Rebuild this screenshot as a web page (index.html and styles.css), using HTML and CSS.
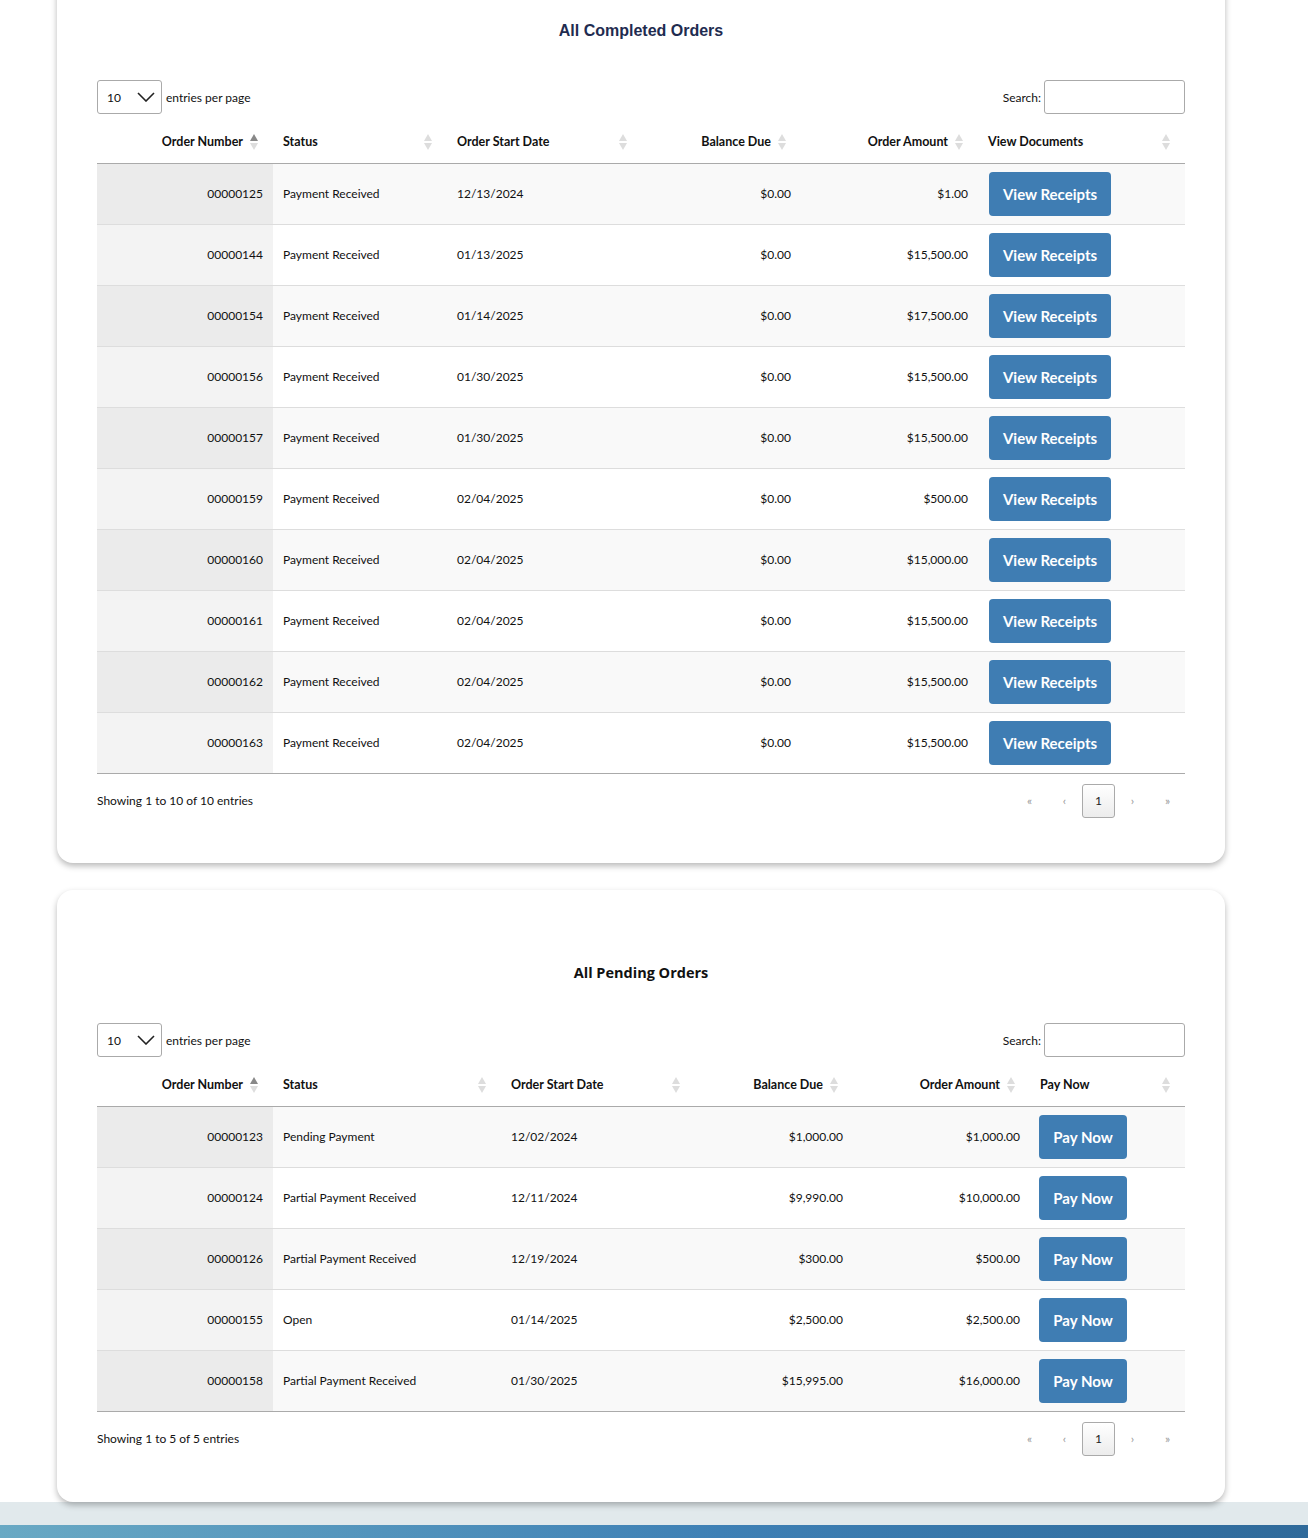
FILE: index.html
```html
<!DOCTYPE html>
<html>
<head>
<meta charset="utf-8">
<link rel="stylesheet" href="styles.css">
</head>
<body>
<div class="page">
  <section class="card card-first">
    <h2 class="title title-completed">All Completed Orders</h2>
    <div class="controls">
      <div class="length">
        <div class="select"><span>10</span><svg class="chev" width="18" height="10" viewBox="0 0 18 10"><path d="M1 1 L9 9 L17 1" fill="none" stroke="#222" stroke-width="1.6"/></svg></div>
        <span class="label">entries per page</span>
      </div>
      <div class="search"><span class="label">Search:</span><div class="input"></div></div>
    </div>
    <table class="dt dt-completed">
      <colgroup><col class="c1"><col class="c2"><col class="c3"><col class="c4"><col class="c5"><col class="c6"></colgroup>
      <thead>
        <tr>
          <th class="num sorted">Order Number<span class="sort"><i class="up"></i><i class="down"></i></span></th>
          <th>Status<span class="sort"><i class="up"></i><i class="down"></i></span></th>
          <th>Order Start Date<span class="sort"><i class="up"></i><i class="down"></i></span></th>
          <th class="num">Balance Due<span class="sort"><i class="up"></i><i class="down"></i></span></th>
          <th class="num">Order Amount<span class="sort"><i class="up"></i><i class="down"></i></span></th>
          <th>View Documents<span class="sort"><i class="up"></i><i class="down"></i></span></th>
        </tr>
      </thead>
      <tbody>
        <tr><td class="num key">00000125</td><td>Payment Received</td><td>12/13/2024</td><td class="num">$0.00</td><td class="num">$1.00</td><td><span class="btn btn-receipts">View Receipts</span></td></tr>
        <tr><td class="num key">00000144</td><td>Payment Received</td><td>01/13/2025</td><td class="num">$0.00</td><td class="num">$15,500.00</td><td><span class="btn btn-receipts">View Receipts</span></td></tr>
        <tr><td class="num key">00000154</td><td>Payment Received</td><td>01/14/2025</td><td class="num">$0.00</td><td class="num">$17,500.00</td><td><span class="btn btn-receipts">View Receipts</span></td></tr>
        <tr><td class="num key">00000156</td><td>Payment Received</td><td>01/30/2025</td><td class="num">$0.00</td><td class="num">$15,500.00</td><td><span class="btn btn-receipts">View Receipts</span></td></tr>
        <tr><td class="num key">00000157</td><td>Payment Received</td><td>01/30/2025</td><td class="num">$0.00</td><td class="num">$15,500.00</td><td><span class="btn btn-receipts">View Receipts</span></td></tr>
        <tr><td class="num key">00000159</td><td>Payment Received</td><td>02/04/2025</td><td class="num">$0.00</td><td class="num">$500.00</td><td><span class="btn btn-receipts">View Receipts</span></td></tr>
        <tr><td class="num key">00000160</td><td>Payment Received</td><td>02/04/2025</td><td class="num">$0.00</td><td class="num">$15,000.00</td><td><span class="btn btn-receipts">View Receipts</span></td></tr>
        <tr><td class="num key">00000161</td><td>Payment Received</td><td>02/04/2025</td><td class="num">$0.00</td><td class="num">$15,500.00</td><td><span class="btn btn-receipts">View Receipts</span></td></tr>
        <tr><td class="num key">00000162</td><td>Payment Received</td><td>02/04/2025</td><td class="num">$0.00</td><td class="num">$15,500.00</td><td><span class="btn btn-receipts">View Receipts</span></td></tr>
        <tr><td class="num key">00000163</td><td>Payment Received</td><td>02/04/2025</td><td class="num">$0.00</td><td class="num">$15,500.00</td><td><span class="btn btn-receipts">View Receipts</span></td></tr>
      </tbody>
    </table>
    <div class="footer">
      <div class="info">Showing 1 to 10 of 10 entries</div>
      <div class="paging">
        <span class="pg">«</span><span class="pg">‹</span><span class="pg current">1</span><span class="pg">›</span><span class="pg">»</span>
      </div>
    </div>
  </section>

  <section class="card card-second">
    <h2 class="title title-pending">All Pending Orders</h2>
    <div class="controls">
      <div class="length">
        <div class="select"><span>10</span><svg class="chev" width="18" height="10" viewBox="0 0 18 10"><path d="M1 1 L9 9 L17 1" fill="none" stroke="#222" stroke-width="1.6"/></svg></div>
        <span class="label">entries per page</span>
      </div>
      <div class="search"><span class="label">Search:</span><div class="input"></div></div>
    </div>
    <table class="dt dt-pending">
      <colgroup><col class="p1"><col class="p2"><col class="p3"><col class="p4"><col class="p5"><col class="p6"></colgroup>
      <thead>
        <tr>
          <th class="num sorted">Order Number<span class="sort"><i class="up"></i><i class="down"></i></span></th>
          <th>Status<span class="sort"><i class="up"></i><i class="down"></i></span></th>
          <th>Order Start Date<span class="sort"><i class="up"></i><i class="down"></i></span></th>
          <th class="num">Balance Due<span class="sort"><i class="up"></i><i class="down"></i></span></th>
          <th class="num">Order Amount<span class="sort"><i class="up"></i><i class="down"></i></span></th>
          <th>Pay Now<span class="sort"><i class="up"></i><i class="down"></i></span></th>
        </tr>
      </thead>
      <tbody>
        <tr><td class="num key">00000123</td><td>Pending Payment</td><td>12/02/2024</td><td class="num">$1,000.00</td><td class="num">$1,000.00</td><td><span class="btn btn-pay">Pay Now</span></td></tr>
        <tr><td class="num key">00000124</td><td>Partial Payment Received</td><td>12/11/2024</td><td class="num">$9,990.00</td><td class="num">$10,000.00</td><td><span class="btn btn-pay">Pay Now</span></td></tr>
        <tr><td class="num key">00000126</td><td>Partial Payment Received</td><td>12/19/2024</td><td class="num">$300.00</td><td class="num">$500.00</td><td><span class="btn btn-pay">Pay Now</span></td></tr>
        <tr><td class="num key">00000155</td><td>Open</td><td>01/14/2025</td><td class="num">$2,500.00</td><td class="num">$2,500.00</td><td><span class="btn btn-pay">Pay Now</span></td></tr>
        <tr><td class="num key">00000158</td><td>Partial Payment Received</td><td>01/30/2025</td><td class="num">$15,995.00</td><td class="num">$16,000.00</td><td><span class="btn btn-pay">Pay Now</span></td></tr>
      </tbody>
    </table>
    <div class="footer">
      <div class="info">Showing 1 to 5 of 5 entries</div>
      <div class="paging">
        <span class="pg">«</span><span class="pg">‹</span><span class="pg current">1</span><span class="pg">›</span><span class="pg">»</span>
      </div>
    </div>
  </section>
</div>
<div class="band"></div>
<div class="gradient"></div>
</body>
</html>
```

FILE: styles.css
```css
* { box-sizing: border-box; }
html, body { margin: 0; padding: 0; }
body {
  background: #ffffff;
  font-family: Lato, "Noto Sans", sans-serif;
  font-size: 13px;
  color: #111;
  overflow: hidden;
}
.page {
  padding: 0 83px 0 57px;
  display: flex;
  flex-direction: column;
  gap: 27px;
}
.card {
  background: #fff;
  border-radius: 16px;
  box-shadow: 0 3px 6px rgba(0,0,0,0.28);
  padding: 0 40px;
}
.card-first {
  margin-top: -30px;
  padding-top: 51px;
  height: 893px;
}
.card-second {
  padding-top: 73px;
  height: 612px;
}
.title {
  margin: 0;
  text-align: center;
  font-weight: bold;
}
.title-completed {
  font-family: "Liberation Sans", Arial, sans-serif;
  font-size: 16px;
  color: #1f2c50;
  line-height: 20px;
}
.title-pending {
  font-family: "Open Sans", "Noto Sans", sans-serif;
  font-size: 14.5px;
  color: #111;
  line-height: 20px;
}
.controls {
  display: flex;
  justify-content: space-between;
  align-items: center;
  margin-top: 40px;
  height: 34px;
}
.card-first .controls { margin-top: 39px; }
.length, .search {
  display: flex;
  align-items: center;
}
.select {
  width: 65px;
  height: 34px;
  border: 1px solid #aaa;
  border-radius: 3px;
  display: flex;
  align-items: center;
  justify-content: space-between;
  padding: 0 6px 0 9px;
  font-size: 12px;
}
.label { font-size: 12px; }
.length .label { margin-left: 4px; }
.search .label { margin-right: 3px; }
.input {
  width: 141px;
  height: 34px;
  border: 1px solid #aaa;
  border-radius: 3px;
}
.dt {
  width: 100%;
  table-layout: fixed;
  border-collapse: collapse;
  margin-top: 7px;
}
.c1 { width: 176px; } .c2 { width: 174px; } .c3 { width: 195px; }
.c4 { width: 159px; } .c5 { width: 177px; } .c6 { width: 207px; }
.p1 { width: 176px; } .p2 { width: 228px; } .p3 { width: 194px; }
.p4 { width: 158px; } .p5 { width: 177px; } .p6 { width: 155px; }
.dt th {
  position: relative;
  text-align: left;
  font-weight: bold;
  font-size: 12.5px;
  padding: 10px 30px 10px 10px;
  height: 42px;
  border-bottom: 1px solid #aaa;
  white-space: nowrap;
}
.dt th.num { text-align: right; }
.sort {
  position: absolute;
  right: 14px;
  top: 50%;
  transform: translateY(-50%);
  width: 9px;
  height: 18px;
  display: flex;
  flex-direction: column;
  justify-content: center;
  gap: 2px;
}
.sort i {
  display: block;
  width: 0;
  height: 0;
  border-left: 4.5px solid transparent;
  border-right: 4.5px solid transparent;
}
.sort .up { border-bottom: 7px solid #ddd; }
.sort .down { border-top: 7px solid #ddd; }
th.sorted .sort .up { border-bottom-color: #888; }
.dt td {
  height: 61px;
  padding: 0 10px;
  border-bottom: 1px solid #ddd;
  vertical-align: middle;
  white-space: nowrap;
  font-size: 12px;
}
.dt tbody tr:last-child td { border-bottom: 1px solid #aaa; }
.dt td.num { text-align: right; }
.dt tbody tr:nth-child(odd) td { background: #f9f9f9; }
.dt tbody tr:nth-child(odd) td.key { background: #ebebeb; }
.dt tbody tr:nth-child(even) td { background: #fff; }
.dt tbody tr:nth-child(even) td.key { background: #f3f3f3; }
.btn {
  display: inline-flex;
  align-items: center;
  justify-content: center;
  height: 44px;
  background: #3f7db3;
  color: #fff;
  border-radius: 4px;
  font-size: 15px;
  font-family: Lato, "Noto Sans", sans-serif;
  font-weight: 700;
}
.btn-receipts { width: 122px; margin-left: 1px; }
.btn-pay { width: 88px; margin-left: -1px; }
.footer {
  display: flex;
  justify-content: space-between;
  align-items: center;
  margin-top: 10px;
}
.info { font-size: 12px; }
.paging {
  display: flex;
  align-items: center;
}
.pg {
  width: 35px;
  height: 34px;
  display: flex;
  align-items: center;
  justify-content: center;
  color: #999;
  font-size: 12px;
}
.pg.current {
  width: 33px;
  color: #222;
  font-size: 12px;
  border: 1px solid #aaa;
  border-radius: 3px;
  background: linear-gradient(#fff, #ececec);
}
.band {
  height: 23px;
  background: #e1e9ec;
}
.gradient {
  height: 20px;
  background: linear-gradient(90deg, #69a9c4 0%, #3e80b5 55%, #2f6a9a 100%);
}
```
